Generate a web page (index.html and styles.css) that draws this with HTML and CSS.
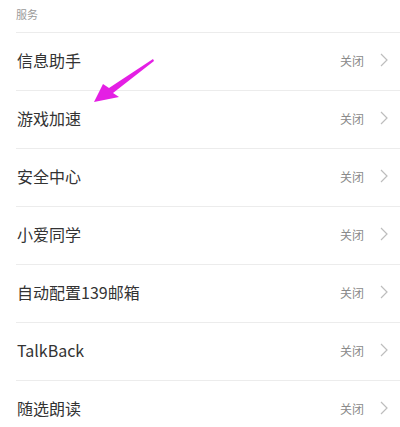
FILE: index.html
```html
<!DOCTYPE html>
<html lang="zh">
<head>
<meta charset="utf-8">
<link rel="stylesheet" href="styles.css">
</head>
<body>
<div class="page">
  <div class="section-title">服务</div>
  <div class="list">
    <div class="row"><span class="label">信息助手</span><span class="value">关闭</span><svg class="chev" viewBox="0 0 8 14" width="8" height="14"><polyline points="1,1 7,7 1,13"/></svg></div>
    <div class="row"><span class="label">游戏加速</span><span class="value">关闭</span><svg class="chev" viewBox="0 0 8 14" width="8" height="14"><polyline points="1,1 7,7 1,13"/></svg></div>
    <div class="row"><span class="label">安全中心</span><span class="value">关闭</span><svg class="chev" viewBox="0 0 8 14" width="8" height="14"><polyline points="1,1 7,7 1,13"/></svg></div>
    <div class="row"><span class="label">小爱同学</span><span class="value">关闭</span><svg class="chev" viewBox="0 0 8 14" width="8" height="14"><polyline points="1,1 7,7 1,13"/></svg></div>
    <div class="row"><span class="label">自动配置139邮箱</span><span class="value">关闭</span><svg class="chev" viewBox="0 0 8 14" width="8" height="14"><polyline points="1,1 7,7 1,13"/></svg></div>
    <div class="row"><span class="label">TalkBack</span><span class="value">关闭</span><svg class="chev" viewBox="0 0 8 14" width="8" height="14"><polyline points="1,1 7,7 1,13"/></svg></div>
    <div class="row"><span class="label">随选朗读</span><span class="value">关闭</span><svg class="chev" viewBox="0 0 8 14" width="8" height="14"><polyline points="1,1 7,7 1,13"/></svg></div>
  </div>
  <svg class="pointer" viewBox="0 0 400 427" width="400" height="427">
    <polygon points="94,102 103,84 109,88 153,59 154,61 113,93 119,97"/>
  </svg>
</div>
</body>
</html>
```
FILE: styles.css
```css
html, body {
  margin: 0;
  padding: 0;
  background: #ffffff;
}
body {
  font-family: "Noto Sans CJK SC", "Noto Sans", sans-serif;
  color: #333333;
}
.page {
  position: relative;
  width: 400px;
  height: 427px;
  overflow: hidden;
}
.section-title {
  height: 32px;
  box-sizing: border-box;
  padding-left: 16px;
  padding-top: 5px;
  font-size: 11px;
  line-height: 18px;
  color: #9a9a9a;
}
.list {
  display: flex;
  flex-direction: column;
}
.row {
  margin-left: 16px;
  height: 58px;
  box-sizing: border-box;
  border-top: 1px solid #ececec;
  display: flex;
  align-items: center;
  padding-left: 1px;
  padding-right: 12px;
  padding-bottom: 3px;
}
.label {
  flex: 1;
  font-size: 16px;
  color: #333333;
}
.value {
  font-size: 12px;
  color: #8a8a8a;
  margin-right: 16px;
  margin-left: 8px;
}
.chev {
  display: block;
  fill: none;
  stroke: #bdbdbd;
  stroke-width: 1.2;
}
.pointer {
  position: absolute;
  left: 0;
  top: 0;
  pointer-events: none;
}
.pointer polygon {
  fill: #e41fe4;
}
```
